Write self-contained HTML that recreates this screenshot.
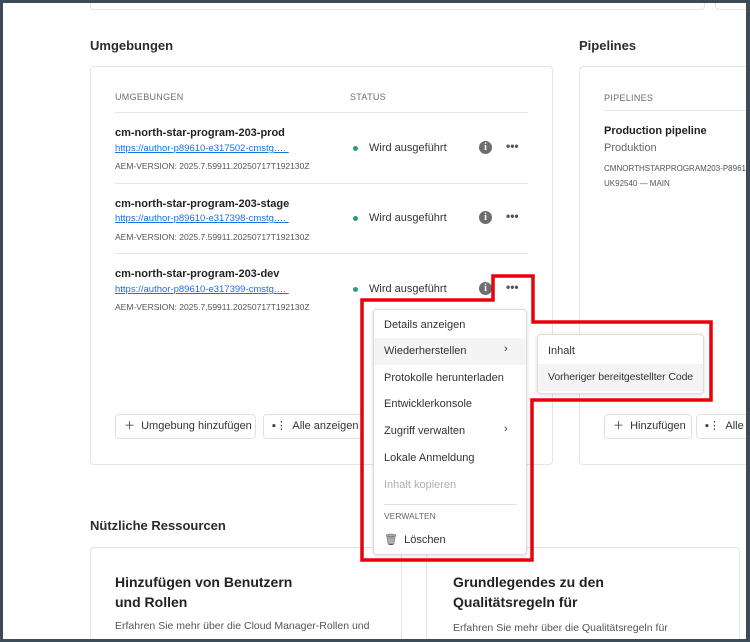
<!DOCTYPE html>
<html><head><meta charset="utf-8"><style>
*{box-sizing:border-box;margin:0;padding:0}
html,body{width:750px;height:642px;overflow:hidden}
body{background:#fff;font-family:"Liberation Sans",sans-serif;color:#2c2c2c;position:relative}
#wrap{position:absolute;left:0;top:0;width:750px;height:642px;overflow:hidden}
#wrap div{white-space:nowrap}
.frame{position:absolute;left:0;top:0;width:750px;height:642px;border:3px solid #3d4a57;border-right-width:4px;pointer-events:none;z-index:50}
.card{position:absolute;border:1px solid #e4e4e4;border-radius:4px;background:#fff}
.h2{position:absolute;font-size:13px;font-weight:bold;color:#2c2c2c}
.th{position:absolute;font-size:9px;color:#6e6e6e;letter-spacing:.3px}
.hr{position:absolute;height:1px;background:#e6e6e6}
.name{position:absolute;font-size:11px;font-weight:bold;color:#222}
.link{position:absolute;font-size:9.5px;color:#1473e6;text-decoration:underline}
.ver{position:absolute;font-size:8.5px;color:#555}
.st{position:absolute;font-size:11px;color:#333}
.dot{position:absolute;width:5px;height:5px;border-radius:50%;background:#2d9d78}
.info{position:absolute;width:13px;height:13px;border-radius:50%;background:#6e6e6e;color:#fff;font-size:10px;font-weight:bold;text-align:center;line-height:13px;font-family:"Liberation Serif",serif}
.more{position:absolute;font-size:12px;font-weight:bold;color:#555}
.btn{position:absolute;height:25px;border:1px solid #e1e1e1;border-radius:4px;font-size:11px;color:#333;line-height:23px;padding-left:8px;background:#fff;overflow:hidden}
.menu{position:absolute;background:#fff;border:1px solid #ddd;border-radius:4px;box-shadow:0 1px 4px rgba(0,0,0,.15);z-index:10}
.mi{position:absolute;left:10px;font-size:11px;color:#333}
</style></head><body><div id="wrap">
<div class="frame"></div>
<div class="card" style="left:90px;top:-10px;width:615px;height:20px"></div>
<div class="card" style="left:715px;top:-10px;width:60px;height:20px"></div>
<div class="h2" style="left:90px;top:38px">Umgebungen</div>
<div class="h2" style="left:579px;top:38px">Pipelines</div>

<div class="card" style="left:90px;top:66px;width:463px;height:399px"></div>
<div class="th" style="left:115px;top:92px">UMGEBUNGEN</div>
<div class="th" style="left:350px;top:92px">STATUS</div>
<div class="hr" style="left:115px;top:112px;width:413px"></div>

<div class="name" style="left:115px;top:127px">cm-north-star-program-203-prod</div>
<div class="link" style="left:115px;top:143px">https://author-p89610-e317502-cmstg.…&nbsp;</div>
<div class="ver" style="left:115px;top:161px">AEM-VERSION: 2025.7.59911.20250717T192130Z</div>
<div class="dot" style="left:353px;top:146px"></div><div class="st" style="left:369px;top:142px">Wird ausgeführt</div>
<div class="info" style="left:479px;top:141px">i</div><div class="more" style="left:506px;top:139px">•••</div>
<div class="hr" style="left:115px;top:183px;width:413px"></div>

<div class="name" style="left:115px;top:198px">cm-north-star-program-203-stage</div>
<div class="link" style="left:115px;top:213px">https://author-p89610-e317398-cmstg.…&nbsp;</div>
<div class="ver" style="left:115px;top:232px">AEM-VERSION: 2025.7.59911.20250717T192130Z</div>
<div class="dot" style="left:353px;top:216px"></div><div class="st" style="left:369px;top:212px">Wird ausgeführt</div>
<div class="info" style="left:479px;top:211px">i</div><div class="more" style="left:506px;top:209px">•••</div>
<div class="hr" style="left:115px;top:253px;width:413px"></div>

<div class="name" style="left:115px;top:268px">cm-north-star-program-203-dev</div>
<div class="link" style="left:115px;top:284px">https://author-p89610-e317399-cmstg.…&nbsp;</div>
<div class="ver" style="left:115px;top:302px">AEM-VERSION: 2025.7.59911.20250717T192130Z</div>
<div class="dot" style="left:353px;top:287px"></div><div class="st" style="left:369px;top:283px">Wird ausgeführt</div>
<div class="info" style="left:479px;top:282px">i</div><div class="more" style="left:506px;top:280px">•••</div>

<div class="btn" style="left:115px;top:414px;width:141px">＋&nbsp; Umgebung hinzufügen</div>
<div class="btn" style="left:263px;top:414px;width:100px">▪⋮&nbsp; Alle anzeigen</div>

<div class="card" style="left:579px;top:66px;width:200px;height:399px"></div>
<div class="th" style="left:604px;top:93px">PIPELINES</div>
<div class="hr" style="left:604px;top:110px;width:150px"></div>
<div class="name" style="left:604px;top:125px">Production pipeline</div>
<div style="position:absolute;left:604px;top:142px;font-size:11px;color:#666">Produktion</div>
<div class="ver" style="left:604px;top:161px;font-size:8px;line-height:15px">CMNORTHSTARPROGRAM203-P89610-<br>UK92540 — MAIN</div>
<div class="btn" style="left:604px;top:414px;width:88px">＋&nbsp; Hinzufügen</div>
<div class="btn" style="left:696px;top:414px;width:80px">▪⋮&nbsp; Alle anzeigen</div>

<div class="h2" style="left:90px;top:518px">Nützliche Ressourcen</div>
<div class="card" style="left:90px;top:547px;width:312px;height:120px"></div>
<div style="position:absolute;left:115px;top:572px;font-size:14px;font-weight:bold;line-height:20px;color:#222">Hinzufügen von Benutzern<br>und Rollen</div>
<div style="position:absolute;left:115px;top:620px;font-size:10.5px;color:#555">Erfahren Sie mehr über die Cloud Manager-Rollen und</div>
<div class="card" style="left:426px;top:547px;width:314px;height:120px"></div>
<div style="position:absolute;left:453px;top:572px;font-size:14px;font-weight:bold;line-height:20px;color:#222">Grundlegendes zu den<br>Qualitätsregeln für</div>
<div style="position:absolute;left:453px;top:622px;font-size:10.5px;color:#555">Erfahren Sie mehr über die Qualitätsregeln für</div>

<div class="menu" style="left:373px;top:309px;width:154px;height:246px">
<div style="position:absolute;left:0;top:28px;width:152px;height:27px;background:#f4f4f4"></div>
<div class="mi" style="top:9px">Details anzeigen</div>
<div class="mi" style="top:35px">Wiederherstellen</div><div class="mi" style="left:130px;top:33px">›</div>
<div class="mi" style="top:62px">Protokolle herunterladen</div>
<div class="mi" style="top:88px">Entwicklerkonsole</div>
<div class="mi" style="top:115px">Zugriff verwalten</div><div class="mi" style="left:130px;top:113px">›</div>
<div class="mi" style="top:142px">Lokale Anmeldung</div>
<div class="mi" style="top:169px;color:#b0b0b0">Inhalt kopieren</div>
<div style="position:absolute;left:10px;top:194px;width:133px;height:1px;background:#e1e1e1"></div>
<div class="mi" style="top:201px;font-size:8.5px;color:#666">VERWALTEN</div>
<div class="mi" style="top:223px;font-size:11px"><span style="color:#555">🗑</span>&nbsp; Löschen</div>
</div>
<div class="menu" style="left:537px;top:334px;width:167px;height:60px">
<div style="position:absolute;left:0;top:29px;width:165px;height:27px;background:#f4f4f4"></div>
<div class="mi" style="top:10px">Inhalt</div>
<div class="mi" style="top:36px;font-size:10.5px;letter-spacing:-0.1px">Vorheriger bereitgestellter Code</div>
</div>
<svg style="position:absolute;left:0;top:0;z-index:20" width="750" height="642"><polygon points="493,276 533,276 533,322 711,322 711,400 532,400 532,560 362,560 362,300 493,300" fill="none" stroke="#e8000b" stroke-width="3.5"/></svg>
</div></body></html>
